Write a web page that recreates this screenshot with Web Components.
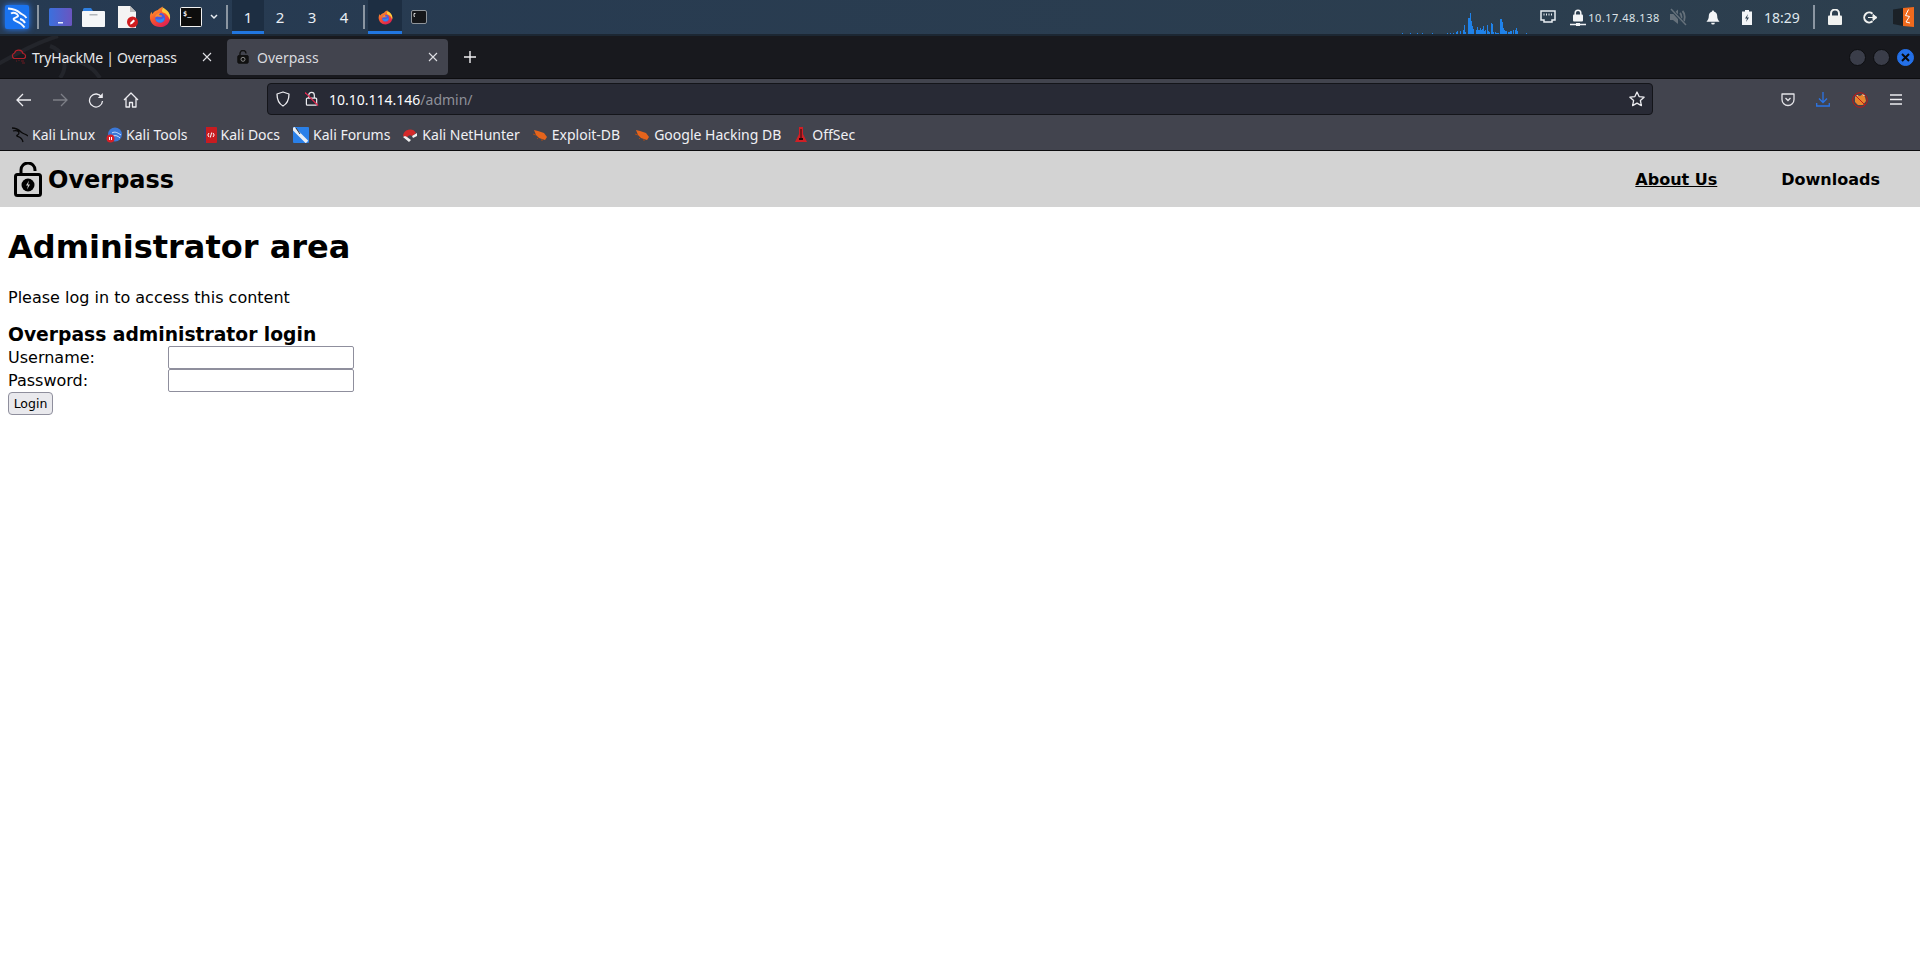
<!DOCTYPE html>
<html lang="en"><head><meta charset="utf-8"><title>Overpass</title>
<style>
html,body{margin:0;padding:0;background:#fff;height:100%;overflow:hidden}
body{display:flex;flex-direction:column;height:963px}
</style></head><body>
<kali-taskbar></kali-taskbar>
<browser-tabs></browser-tabs>
<browser-toolbar></browser-toolbar>
<bookmark-bar></bookmark-bar>
<overpass-page></overpass-page>
<script>
const fox=s=>`<svg width="${s}" height="${s}" viewBox="0 0 24 24"><defs><linearGradient id="fx" x1="0" y1="0" x2="0.6" y2="1"><stop offset="0" stop-color="#ffb52e"/><stop offset=".55" stop-color="#f7542f"/><stop offset="1" stop-color="#e0224f"/></linearGradient></defs><path fill="url(#fx)" d="M12 23C5.6 23 1 18.2 1 12.3c0-2.300.6-4.300 1.800-6 .1 1 .5 1.800 1 2.400C5 6 7.500 5 9.800 4.300 10.600 3 13 1.500 15.500.5c-.9 1.600-.8 2.800-.3 3.600C19.500 5 23 8 23 12.500 23 18.500 18.400 23 12 23z"/><path fill="#ffc93c" d="M15 1.500c4 2 8 5.500 8 10.500 0 1-.2 2-.5 3-1-4-3.500-6.800-7-8-1-.3-2-1.300-.5-5.500z"/><circle cx="12.200" cy="13" r="5.400" fill="#4a5be0"/><path fill="#2f8bf0" d="M7 13.500c2 1.500 6 2 9.500-1 1 3-1.800 5.500-4.500 5.500-2.700 0-5-2-5-4.500z"/><path fill="#ff8a2a" d="M6.500 12.500C7 9 9.500 7.300 12.500 7.500c-1 .9-1.500 1.500-1.500 2.300 1.500.5 3 .3 3.500 1-1.200 1.300-3.500 1-5 .7-.9.2-2 .5-3 1z"/></svg>`;
class KaliTaskbar extends HTMLElement{
 connectedCallback(){
  const bars=[[2,1],[10,1],[17,1],[22,1],[32,1],[47,1],[50,1],[53,1],[56,2],[57,3],[60,3],[63,4],[64,9],[65,2],[68,16],[69,16],[70,21],[71,13],[72,8],[73,5],[76,4],[77,7],[78,4],[79,4],[80,6],[81,4],[82,5],[83,8],[84,3],[85,4],[87,9],[88,3],[89,2],[91,11],[92,10],[93,2],[95,2],[96,1],[97,1],[98,1],[100,15],[101,15],[102,12],[103,6],[104,4],[105,3],[106,3],[108,2],[109,2],[110,3],[111,3],[113,4],[115,4],[116,6],[117,3],[126,1]];
  const rects=bars.map(([x,h])=>`<rect x="${x}" y="${22-h}" width="1" height="${h}"/>`).join('');
  this.attachShadow({mode:'open'}).innerHTML=`<style>
  :host{display:flex;align-items:stretch;height:34px;flex:none;background:linear-gradient(90deg,#263a52,#2d3f4e);border-bottom:2px solid #1c2733;color:#e8edf2;font:14px "Noto Sans",sans-serif;overflow:hidden}
  .it{display:flex;align-items:center;justify-content:center;flex:none}
  .sep{width:2px;height:24px;background:#8b96a2;align-self:center;flex:none}
  .ws{width:32px;box-sizing:border-box;display:flex;align-items:center;justify-content:center;font-size:15px;flex:none;color:#e8eef4}
  .on{background:#1d2e42;box-shadow:inset 0 -3px 0 #2176e0}
  .sp{flex:1}
  .kali{filter:drop-shadow(0 0 3px #2a7fff)}
  </style>
  <div class="it kali" style="width:24px;margin-left:5px"><svg width="24" height="24" viewBox="0 0 24 24"><rect width="24" height="24" rx="2" fill="#1a73f0"/><path d="M3 3.500c5 .5 9 1.500 11.500 4 2 2 4.500 2 7 5.500M6 8.500c2.500-1.500 6-.5 7 2 .7 2-4.500 2-4.500 3.500 0 2.500 7 2 11 8.500M15 14c2.500.5 4 2 5 4" fill="none" stroke="#f5f8ff" stroke-width="1.900"/></svg></div>
  <div class="sep" style="margin-left:8px"></div>
  <div class="it" style="width:24px;margin-left:9px"><svg width="23" height="18" viewBox="0 0 23 18"><defs><linearGradient id="d" x1="0" x2="1"><stop offset="0" stop-color="#3b70dd"/><stop offset="1" stop-color="#6a55c0"/></linearGradient></defs><rect width="23" height="18" rx="1.500" fill="url(#d)"/><rect x="9" y="14" width="5" height="1.500" fill="#e6ecff"/></svg></div>
  <div class="it" style="width:24px;margin-left:9px"><svg width="23" height="20" viewBox="0 0 23 20"><path d="M1 2.500A1.500 1.500 0 0 1 2.500 1H9l2 3h11v3H1z" fill="#2f7fe0"/><rect y="4" x="0" width="23" height="16" rx="1" fill="#f4f6f8"/><rect x="7.500" y="7" width="8" height="1.500" fill="#b0b6bc"/></svg></div>
  <div class="it" style="width:23px;margin-left:11px"><svg width="22" height="24" viewBox="0 0 22 24"><path d="M1 1h12l6 6v16H1z" fill="#f4f4f4"/><path d="M13 1l6 6h-6z" fill="#bbb"/><circle cx="15.500" cy="17" r="5.500" fill="#d01c1f"/><path d="M13 19.500l.5-2 3-3 1.500 1.500-3 3z" fill="#fff"/></svg></div>
  <div class="it" style="width:22px;margin-left:10px">${fox(22)}</div>
  <div class="it" style="width:22px;margin-left:9px"><svg width="22" height="20" viewBox="0 0 22 20"><rect x=".5" y=".5" width="21" height="19" rx="1" fill="#0d0d0d" stroke="#f2f2f2"/><text x="3" y="9" font-family="DejaVu Sans Mono,monospace" font-size="7" font-weight="bold" fill="#eee">$_</text></svg></div>
  <div class="it" style="width:8px;margin-left:8px"><svg width="8" height="6" viewBox="0 0 8 6"><path d="M1 1l3 3 3-3" fill="none" stroke="#e8edf2" stroke-width="1.500"/></svg></div>
  <div class="sep" style="margin-left:8px"></div>
  <div class="ws on" style="margin-left:4px">1</div><div class="ws">2</div><div class="ws">3</div><div class="ws">4</div>
  <div class="sep" style="margin-left:3px"></div>
  <div class="it on" style="width:34px;margin-left:3px">${fox(15)}</div>
  <div class="it" style="width:34px"><svg width="16" height="14" viewBox="0 0 16 14"><rect x=".5" y=".5" width="15" height="13" rx="1.500" fill="#15171a" stroke="#8f959b"/><path d="M3 3.500h1.500M3 3.500v3h.8" stroke="#ddd" fill="none"/></svg></div>
  <div class="sp"></div>
  <svg width="130" height="22" viewBox="0 0 130 22" style="flex:none;align-self:flex-end;fill:#1f82ea;margin-right:10px">${rects}</svg>
  <div class="it" style="width:16px"><svg width="16" height="14" viewBox="0 0 16 14"><path d="M1 1h14v9h-3v2H4v-2H1z" fill="none" stroke="#e8edf2" stroke-width="1.500"/><path d="M4 3.500v2M6.500 3.500v2M9 3.500v2M11.500 3.500v2" stroke="#e8edf2"/></svg></div>
  <div class="it" style="width:16px;margin-left:14px"><svg width="16" height="17" viewBox="0 0 16 17"><rect x="3" y="5.500" width="10" height="7" rx="1" fill="#f2f4f6"/><path d="M5.200 6V4a2.800 2.800 0 0 1 5.600 0v2" fill="none" stroke="#f2f4f6" stroke-width="1.500"/><path d="M0 15.500h6M10 15.500h6" stroke="#f2f4f6" stroke-width="1.300"/><rect x="6" y="14" width="4" height="3" fill="#f2f4f6"/></svg></div>
  <span class="it" style="font-size:11px;margin-left:2px;width:72px;color:#dde3e8;letter-spacing:.5px;white-space:nowrap">10.17.48.138</span>
  <div class="it" style="width:18px;margin-left:9px"><svg width="18" height="18" viewBox="0 0 18 18"><path d="M1 6h3l5-4.500V16L4 12H1z" fill="#66717b"/><path d="M11 5c2 2 2 6 0 8M13.500 3c3 3 3 9 0 12" fill="none" stroke="#66717b" stroke-width="1.800"/><path d="M1.500 .5l15.500 17" stroke="#2b3e4e" stroke-width="3.200"/><path d="M2 1l15 16" stroke="#66717b" stroke-width="1.500"/></svg></div>
  <div class="it" style="width:14px;margin-left:19px"><svg width="15" height="15" viewBox="0 0 15 15"><path d="M7.500 0c.8 0 1 .5 1 1 2.500.6 3.500 2.500 3.500 5 0 3 1 4.500 2.500 6H.5C2 10.500 3 9 3 6c0-2.500 1-4.400 3.500-5 0-.5.200-1 1-1zM5.500 13h4a2 2 0 0 1-4 0z" fill="#f3f5f7"/></svg></div>
  <div class="it" style="width:10px;margin-left:22px"><svg width="10" height="15" viewBox="0 0 10 15"><path d="M3 0h4v1.500h3V15H0V1.500h3z" fill="#f3f5f7"/><path d="M6 4L3 8.500h2L4 12l3-4.500H5z" fill="#2b3e4e"/></svg></div>
  <span class="it" style="width:36px;margin-left:12px;color:#dfe6ec;font-size:14px">18:29</span>
  <div class="sep" style="margin-left:13px"></div>
  <div class="it" style="width:14px;margin-left:13px"><svg width="14" height="16" viewBox="0 0 14 16"><rect y="6.500" width="14" height="9.500" rx="1" fill="#f1f2f0"/><path d="M3 7V4.500a4 4 0 0 1 8 0V7" fill="none" stroke="#f1f2f0" stroke-width="2"/></svg></div>
  <div class="it" style="width:16px;margin-left:20px"><svg width="16" height="13" viewBox="0 0 16 13"><path d="M10.500 2.700A5 5 0 1 0 10.500 10.300" fill="none" stroke="#f1f2f0" stroke-width="2"/><path d="M6 6.500h7M11 3.500l4 3-4 3z" fill="#f1f2f0" stroke="#f1f2f0"/></svg></div>
  <div class="it" style="width:21px;margin-left:15px;margin-right:6px"><svg width="21" height="20" viewBox="0 0 21 20"><path d="M0 2.500L10 1v18L0 17z" fill="#1b2127"/><path d="M10 1l11-1v20l-11-1z" fill="#f06a1d"/><path d="M15.500 2.500l-3 6 4 1-3.500 5.500 4 1" fill="none" stroke="#fff" stroke-width="1"/></svg></div>`;
 }
}
class BrowserTabs extends HTMLElement{
 connectedCallback(){
  const x=`<svg class="x" width="10" height="10" viewBox="0 0 10 10"><path d="M1 1l8 8M9 1l-8 8" stroke="#dfe0e4" stroke-width="1.100"/></svg>`;
  this.attachShadow({mode:'open'}).innerHTML=`<style>
  :host{display:flex;position:relative;align-items:center;height:42px;flex:none;background:#18191e;color:#e6e7ea;font:14px "Noto Sans",sans-serif;border-bottom:1px solid #0c0c0f;box-sizing:content-box;overflow:hidden}
  .tab{height:36px;width:221px;box-sizing:border-box;display:flex;align-items:center;border-radius:4px;flex:none;position:relative}
  .a{background:#42444e;margin-left:7px;padding:0 10px 0 10px}
  .t1{width:220px;padding:0 8px 0 10px}
  .t{flex:1;margin-left:6px;white-space:nowrap}
  .x{flex:none}
  .plus{margin-left:16px;flex:none}
  .sp{flex:1}
  .c{width:17px;height:17px;border-radius:50%;background:#3a3d49;border:1px solid #0d0e11;box-sizing:border-box;margin-left:7px;flex:none;display:flex;align-items:center;justify-content:center}
  .drag{position:absolute;left:0;top:0;pointer-events:none}
  </style>
  <svg class="drag" width="240" height="42" viewBox="0 0 240 42"><path d="M-5 30C25 12 45 4 58 0M60 42C70 28 62 14 50 10M100 42c-8-12-20-18-34-18" fill="none" stroke="#23252b" stroke-width="4"/></svg>
  <div class="tab t1"><svg width="18" height="16" viewBox="0 0 18 16" style="flex:none"><path d="M4 9.500a3 3 0 0 1 .5-5.500A4.500 4.500 0 0 1 13 4.500a2.600 2.600 0 0 1 1 5H4z" fill="none" stroke="#b3202a" stroke-width="1.200"/><path d="M9 11v1M11 12h3M12 14h3M7 12H6" stroke="#6d1a20" stroke-width="1"/></svg><span class="t" style="margin-left:4px;letter-spacing:-.25px">TryHackMe | Overpass</span>${x}</div>
  <div class="tab a"><svg width="12" height="14" viewBox="0 0 12 14" style="flex:none"><rect x=".8" y="5.500" width="10.400" height="7.700" rx="1" fill="#111" stroke="#111"/><circle cx="6" cy="9.300" r="2" fill="none" stroke="#888" stroke-width="1"/><path d="M3 5.500V3.500a3 3 0 0 1 6 0" fill="none" stroke="#111" stroke-width="1.400"/></svg><span class="t" style="margin-left:8px;color:#d9dadf">Overpass</span>${x}</div>
  <svg class="plus" width="12" height="12" viewBox="0 0 12 12"><path d="M6 0v12M0 6h12" stroke="#f0f0f2" stroke-width="1.400"/></svg>
  <div class="sp"></div>
  <div class="c"></div><div class="c"></div>
  <div class="c" style="background:#2470e8;margin-right:6px;border-color:#2470e8"><svg width="9" height="9" viewBox="0 0 9 9"><path d="M1 1l7 7M8 1L1 8" stroke="#0a0a0a" stroke-width="2"/></svg></div>`;
 }
}
class BrowserToolbar extends HTMLElement{
 connectedCallback(){
  this.attachShadow({mode:'open'}).innerHTML=`<style>
  :host{display:flex;align-items:center;height:37px;box-sizing:border-box;flex:none;background:#42444e;color:#fbfbfe;font:14px "Noto Sans",sans-serif;padding-top:4px}
  .b{flex:none;display:flex;align-items:center;justify-content:center}
  .url{margin-left:128px;flex:1;height:32px;align-self:flex-start;box-sizing:border-box;background:#282a35;border:1px solid #14151a;border-radius:4px;display:flex;align-items:center}
  .addr{white-space:nowrap;margin-left:10px;flex:1;font-size:14px}
  .addr span{color:#8e9099}
  </style>
  <div class="b" style="width:16px;margin-left:16px"><svg width="16" height="14" viewBox="0 0 16 14"><path d="M15 7H1.500M7 1L1 7l6 6" fill="none" stroke="#ececf0" stroke-width="1.300"/></svg></div>
  <div class="b" style="width:16px;margin-left:20px"><svg width="16" height="14" viewBox="0 0 16 14"><path d="M1 7h13.500M9 1l6 6-6 6" fill="none" stroke="#7d7f87" stroke-width="1.300"/></svg></div>
  <div class="b" style="width:16px;margin-left:20px"><svg width="16" height="16" viewBox="0 0 16 16"><path d="M13.500 5A6.500 6.500 0 1 0 14.500 9" fill="none" stroke="#ececf0" stroke-width="1.300"/><path d="M14.800 1v5h-5z" fill="#ececf0"/></svg></div>
  <div class="b" style="width:16px;margin-left:19px"><svg width="16" height="16" viewBox="0 0 16 16"><path d="M1 8l7-7 7 7M3 6.500V15h3.500v-4.500h3V15H13V6.500" fill="none" stroke="#ececf0" stroke-width="1.300" stroke-linejoin="round"/></svg></div>
  <div class="url">
   <div class="b" style="width:14px;margin-left:8px"><svg width="14" height="16" viewBox="0 0 14 16"><path d="M7 1l6 2c0 6-1.500 9.500-6 12C2.500 12.500 1 9 1 3z" fill="none" stroke="#ececf0" stroke-width="1.300" stroke-linejoin="round"/></svg></div>
   <div class="b" style="width:14px;margin-left:15px"><svg width="15" height="16" viewBox="0 0 15 16"><rect x="1.500" y="7" width="11" height="7.500" rx="1" fill="none" stroke="#ececf0" stroke-width="1.300"/><path d="M4 7V4a3 3 0 0 1 6 0v3" fill="none" stroke="#ececf0" stroke-width="1.300"/><path d="M0 1l14 14" stroke="#e22850" stroke-width="1.300"/></svg></div>
   <div class="addr">10.10.114.146<span>/admin/</span></div>
   <div class="b" style="width:16px;margin-right:7px"><svg width="16" height="16" viewBox="0 0 16 16"><path d="M8 1l2.100 4.600 5 .6-3.700 3.400 1 5L8 12.100 3.600 14.600l1-5L.9 6.200l5-.6z" fill="none" stroke="#ececf0" stroke-width="1.300" stroke-linejoin="round"/></svg></div>
  </div>
  <div class="b" style="width:14px;margin-left:128px"><svg width="14" height="14" viewBox="0 0 14 14"><path d="M1 1h12v5.500a6 6 0 0 1-12 0z" fill="none" stroke="#e4e4e8" stroke-width="1.300" stroke-linejoin="round"/><path d="M4.500 5L7 7.500 9.500 5" fill="none" stroke="#e4e4e8" stroke-width="1.300"/></svg></div>
  <div class="b" style="width:14px;margin-left:21px"><svg width="14" height="15" viewBox="0 0 14 15"><path d="M7 0v10M3 6.500L7 10.500 11 6.500M.7 11v3h12.600v-3" fill="none" stroke="#2b74e6" stroke-width="1.300"/></svg></div>
  <div class="b" style="width:16px;margin-left:22px"><svg width="16" height="16" viewBox="0 0 16 16"><path d="M3 6l2-3 3 1 3-2 2 3 1 4-3 4H6l-3-3z" fill="#e8862e"/><path d="M3.500 5l2-1.500M11 2.500l1.500 1.500" stroke="#fff"/><circle cx="8" cy="8" r="7.300" fill="none" stroke="#c11616" stroke-width="1"/><path d="M3 3l10 10" stroke="#c11616" stroke-width="1"/></svg></div>
  <div class="b" style="width:12px;margin-left:22px;margin-right:18px"><svg width="12" height="11" viewBox="0 0 12 11"><path d="M0 1h12M0 5.500h12M0 10h12" stroke="#ececf0" stroke-width="1.300"/></svg></div>`;
 }
}
class BookmarkBar extends HTMLElement{
 connectedCallback(){
  const bug=`<svg width="15" height="12" viewBox="0 0 15 12"><path d="M1 1l4 1 6 2 3 4-2 3-6-2-3-3z" fill="#e5641c"/><path d="M0 5l3 1M4 10l2-2M9 12l0-2" stroke="#a84b18"/></svg>`;
  const items=[
   [`<svg width="16" height="16" viewBox="0 0 16 16"><path d="M0 1c4 0 7 2 9 4s5 2 7 4M1 4c3-1 6 0 6 2s-3 2-2 3 5 1 6 6" fill="none" stroke="#0a0a0a" stroke-width="1.300"/></svg>`,'Kali Linux',11],
   [`<svg width="16" height="16" viewBox="0 0 16 16"><circle cx="9" cy="7.500" r="7" fill="#3b78d8"/><path d="M6 6c3-2 6 0 9 2M7 9c3-1 5 0 7 2" stroke="#cfe0ff" fill="none"/><circle cx="4.500" cy="11.500" r="4" fill="#d81f26"/><path d="M3.500 10v3M5.500 10v3" stroke="#fff"/></svg>`,'Kali Tools',16],
   [`<svg width="13" height="16" viewBox="0 0 13 16"><rect width="13" height="16" fill="#c81c20" rx="1"/><rect width="2" height="16" fill="#3d3f66"/><path d="M5 6L3.800 8 5 10M9 6l1.200 2L9 10M7.700 5.500L6.300 10.500" stroke="#fff" fill="none"/></svg>`,'Kali Docs',13],
   [`<svg width="16" height="16" viewBox="0 0 16 16"><rect width="16" height="16" fill="#2a80e8" rx="1"/><path d="M0 1l14 14" stroke="#e8eef5" stroke-width="3.500"/><path d="M3 1l4 6" stroke="#333"/></svg>`,'Kali Forums',12],
   [`<svg width="16" height="16" viewBox="0 0 16 16"><path d="M1 9a7 7 0 0 1 13-3L10 9a3 3 0 0 0-5 2z" fill="#d42a2a"/><path d="M1 10l6 5 2-2-4-3-2-1zM10 9l5-3 0 3-4 2z" fill="#f0f0f0"/></svg>`,'Kali NetHunter',13],
   [bug,'Exploit-DB',15],
   [bug,'Google Hacking DB',13],
   [`<svg width="14" height="17" viewBox="0 0 14 17"><path d="M5 1h4v7l4 8H1l4-8z" fill="#cf1f25"/><path d="M6.500 3h1v11h-1zM5 12h4v2H5z" fill="#23090a"/></svg>`,'OffSec',0]
  ];
  this.attachShadow({mode:'open'}).innerHTML=`<style>
  :host{display:flex;align-items:center;height:35px;flex:none;box-sizing:border-box;background:#42444e;border-bottom:1px solid #0c0c0f;color:#f0f0f4;font:14px "Noto Sans",sans-serif;padding-left:12px;padding-top:3px}
  .i{display:flex;align-items:center;flex:none;white-space:nowrap}
  .i svg{flex:none;margin-right:4px}
  </style>`+items.map(([s,t,g])=>`<div class="i" style="margin-right:${g}px">${s}<span>${t}</span></div>`).join('');
 }
}
class OverpassPage extends HTMLElement{
 connectedCallback(){
  this.attachShadow({mode:'open'}).innerHTML=`<style>
  :host{display:block;flex:1;background:#fff;color:#000;font:16px "DejaVu Sans",sans-serif}
  header{display:flex;align-items:center;height:56px;background:#d3d3d3;padding-left:14px}
  .logo{font-size:24px;font-weight:bold;margin-left:6px;padding-top:1px}
  nav{margin-left:auto;display:flex;gap:64px;padding-right:40px;font-weight:bold;font-size:16px}
  nav a{color:#000;text-decoration:none}
  nav a.u{text-decoration:underline}
  main{padding:0 8px}
  h1{font-size:32px;margin:22.44px 0 21.44px;line-height:37px}
  p{margin:20.44px 0 0;line-height:19px}
  h3{font-size:18.72px;margin:16.72px 0 0;line-height:22px}
  .row{display:flex;height:23px;align-items:center}
  label{width:160px;flex:none}
  input{box-sizing:border-box;width:186px;height:23px;border:1px solid #8f8f9d;border-radius:2px;background:#fff;margin:0;padding:1px 2px;font:13.33px "DejaVu Sans",sans-serif}
  button{box-sizing:border-box;display:block;width:45px;height:23px;padding:0;background:#e9e9ed;border:1px solid #8f8f9d;border-radius:4px;color:#000;font:12.5px "DejaVu Sans",sans-serif}
  </style>
  <header>
   <svg width="28" height="35" viewBox="0 0 28 35" style="flex:none"><rect x="1.500" y="12.500" width="25" height="21" rx="2" fill="none" stroke="#000" stroke-width="3"/><path d="M7 12V8a7 7 0 0 1 14 0v1" fill="none" stroke="#000" stroke-width="3"/><circle cx="14" cy="23" r="6.500" fill="#000"/><path d="M15 18.500l-3 5h2l-1 4 3-5h-2z" fill="#d3d3d3"/></svg>
   <span class="logo">Overpass</span>
   <nav><a class="u" href="#">About Us</a><a href="#">Downloads</a></nav>
  </header>
  <main>
   <h1>Administrator area</h1>
   <p>Please log in to access this content</p>
   <h3>Overpass administrator login</h3>
   <div class="row"><label>Username:</label><input type="text"></div>
   <div class="row"><label>Password:</label><input type="password"></div>
   <button>Login</button>
  </main>`;
 }
}
customElements.define('kali-taskbar',KaliTaskbar);
customElements.define('browser-tabs',BrowserTabs);
customElements.define('browser-toolbar',BrowserToolbar);
customElements.define('bookmark-bar',BookmarkBar);
customElements.define('overpass-page',OverpassPage);
</script>
</body></html>
